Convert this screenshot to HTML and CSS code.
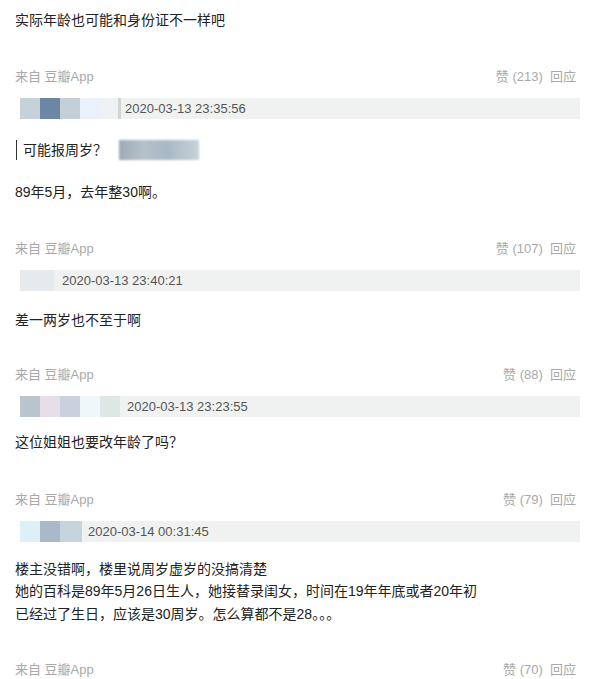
FILE: index.html
```html
<!DOCTYPE html>
<html lang="zh-CN">
<head>
  <meta charset="UTF-8">
  <meta name="viewport" content="width=device-width, initial-scale=1.0">
  <title>评论</title>
  <link rel="stylesheet" href="styles.css">
</head>
<body>
  <main class="thread">
    <p class="lead">实际年龄也可能和身份证不一样吧</p>

    <section class="comment c1">
      <div class="meta">
        <span>来自 豆瓣App</span>
        <span class="acts">赞 (213)&nbsp; 回应</span>
      </div>
      <div class="bar">
        <span class="px" style="background:#c6d1d9"></span>
        <span class="px" style="background:#6b87a3"></span>
        <span class="px" style="background:#c4ced6"></span>
        <span class="px" style="background:#e9f1fb"></span>
        <span class="px edge" style="background:#eef2f4"></span>
        <span class="date">2020-03-13 23:35:56</span>
      </div>
      <div class="quote-row">
        <blockquote class="quote">可能报周岁？</blockquote>
        <span class="smudge"></span>
      </div>
      <p class="text">89年5月，去年整30啊。</p>
    </section>

    <section class="comment c2">
      <div class="meta">
        <span>来自 豆瓣App</span>
        <span class="acts">赞 (107)&nbsp; 回应</span>
      </div>
      <div class="bar">
        <span class="px" style="background:#e6eaec;width:34px"></span>
        <span class="date">2020-03-13 23:40:21</span>
      </div>
      <p class="text">差一两岁也不至于啊</p>
    </section>

    <section class="comment c3">
      <div class="meta">
        <span>来自 豆瓣App</span>
        <span class="acts">赞 (88)&nbsp; 回应</span>
      </div>
      <div class="bar">
        <span class="px" style="background:#b9c4cc"></span>
        <span class="px" style="background:#e6dfea"></span>
        <span class="px" style="background:#c8d1dd"></span>
        <span class="px" style="background:#eef8fa"></span>
        <span class="px" style="background:#dde8e6"></span>
        <span class="date">2020-03-13 23:23:55</span>
      </div>
      <p class="text">这位姐姐也要改年龄了吗？</p>
    </section>

    <section class="comment c4">
      <div class="meta">
        <span>来自 豆瓣App</span>
        <span class="acts">赞 (79)&nbsp; 回应</span>
      </div>
      <div class="bar">
        <span class="px" style="background:#ddf0f8"></span>
        <span class="px" style="background:#a9b9c9"></span>
        <span class="px" style="background:#c6d4de;width:22px"></span>
        <span class="date">2020-03-14 00:31:45</span>
      </div>
      <p class="text">楼主没错啊，楼里说周岁虚岁的没搞清楚<br>她的百科是89年5月26日生人，她接替录闺女，时间在19年年底或者20年初<br>已经过了生日，应该是30周岁。怎么算都不是28。。。</p>
    </section>

    <section class="comment c5">
      <div class="meta">
        <span>来自 豆瓣App</span>
        <span class="acts">赞 (70)&nbsp; 回应</span>
      </div>
    </section>
  </main>
</body>
</html>
```

FILE: styles.css
```css
body {
  margin: 0;
  background: #fff;
  color: #222;
  font-family: "Liberation Sans", "Noto Sans CJK SC", sans-serif;
  font-size: 14px;
}
.thread {
  padding: 9px 15px 0 15px;
}
.lead {
  margin: 0;
  line-height: 22px;
}
.comment {
  padding-top: 35px;
}
.c1 {
  padding-top: 36px;
}
.c3 {
  padding-top: 34px;
}
.c4 {
  padding-top: 36px;
}
.meta {
  display: flex;
  justify-content: space-between;
  color: #a9a9a9;
  font-size: 13px;
  line-height: 20px;
}
.bar {
  display: flex;
  align-items: center;
  height: 21px;
  margin: 11px -4px 0 5px;
  background: #f0f2f2;
}
.px {
  width: 20px;
  height: 100%;
  filter: blur(0.6px);
}
.edge {
  width: 18px;
  border-right: 3px solid #d2d4d4;
}
.date {
  margin-left: 7px;
  color: #555;
  font-size: 13px;
}
.c1 .date {
  margin-left: 4px;
}
.c2 .date {
  margin-left: 8px;
}
.c4 .date {
  margin-left: 6px;
}
.quote-row {
  display: flex;
  align-items: center;
  margin-top: 21px;
}
.quote {
  margin: 0 0 0 1px;
  padding-left: 6px;
  border-left: 1px solid #333;
  line-height: 20px;
  width: 96px;
}
.smudge {
  width: 80px;
  height: 20px;
  background: linear-gradient(90deg, #9eaab4 0%, #b4c2cc 30%, #a7b8c6 60%, #c8d2d8 100%);
  filter: blur(1px);
}
.text {
  margin: 16px 0 0 0;
  line-height: 22.5px;
}
.c1 .text {
  margin-top: 21px;
}
.c2 .text {
  margin-top: 18px;
}
.c3 .text {
  margin-top: 14px;
}
```
